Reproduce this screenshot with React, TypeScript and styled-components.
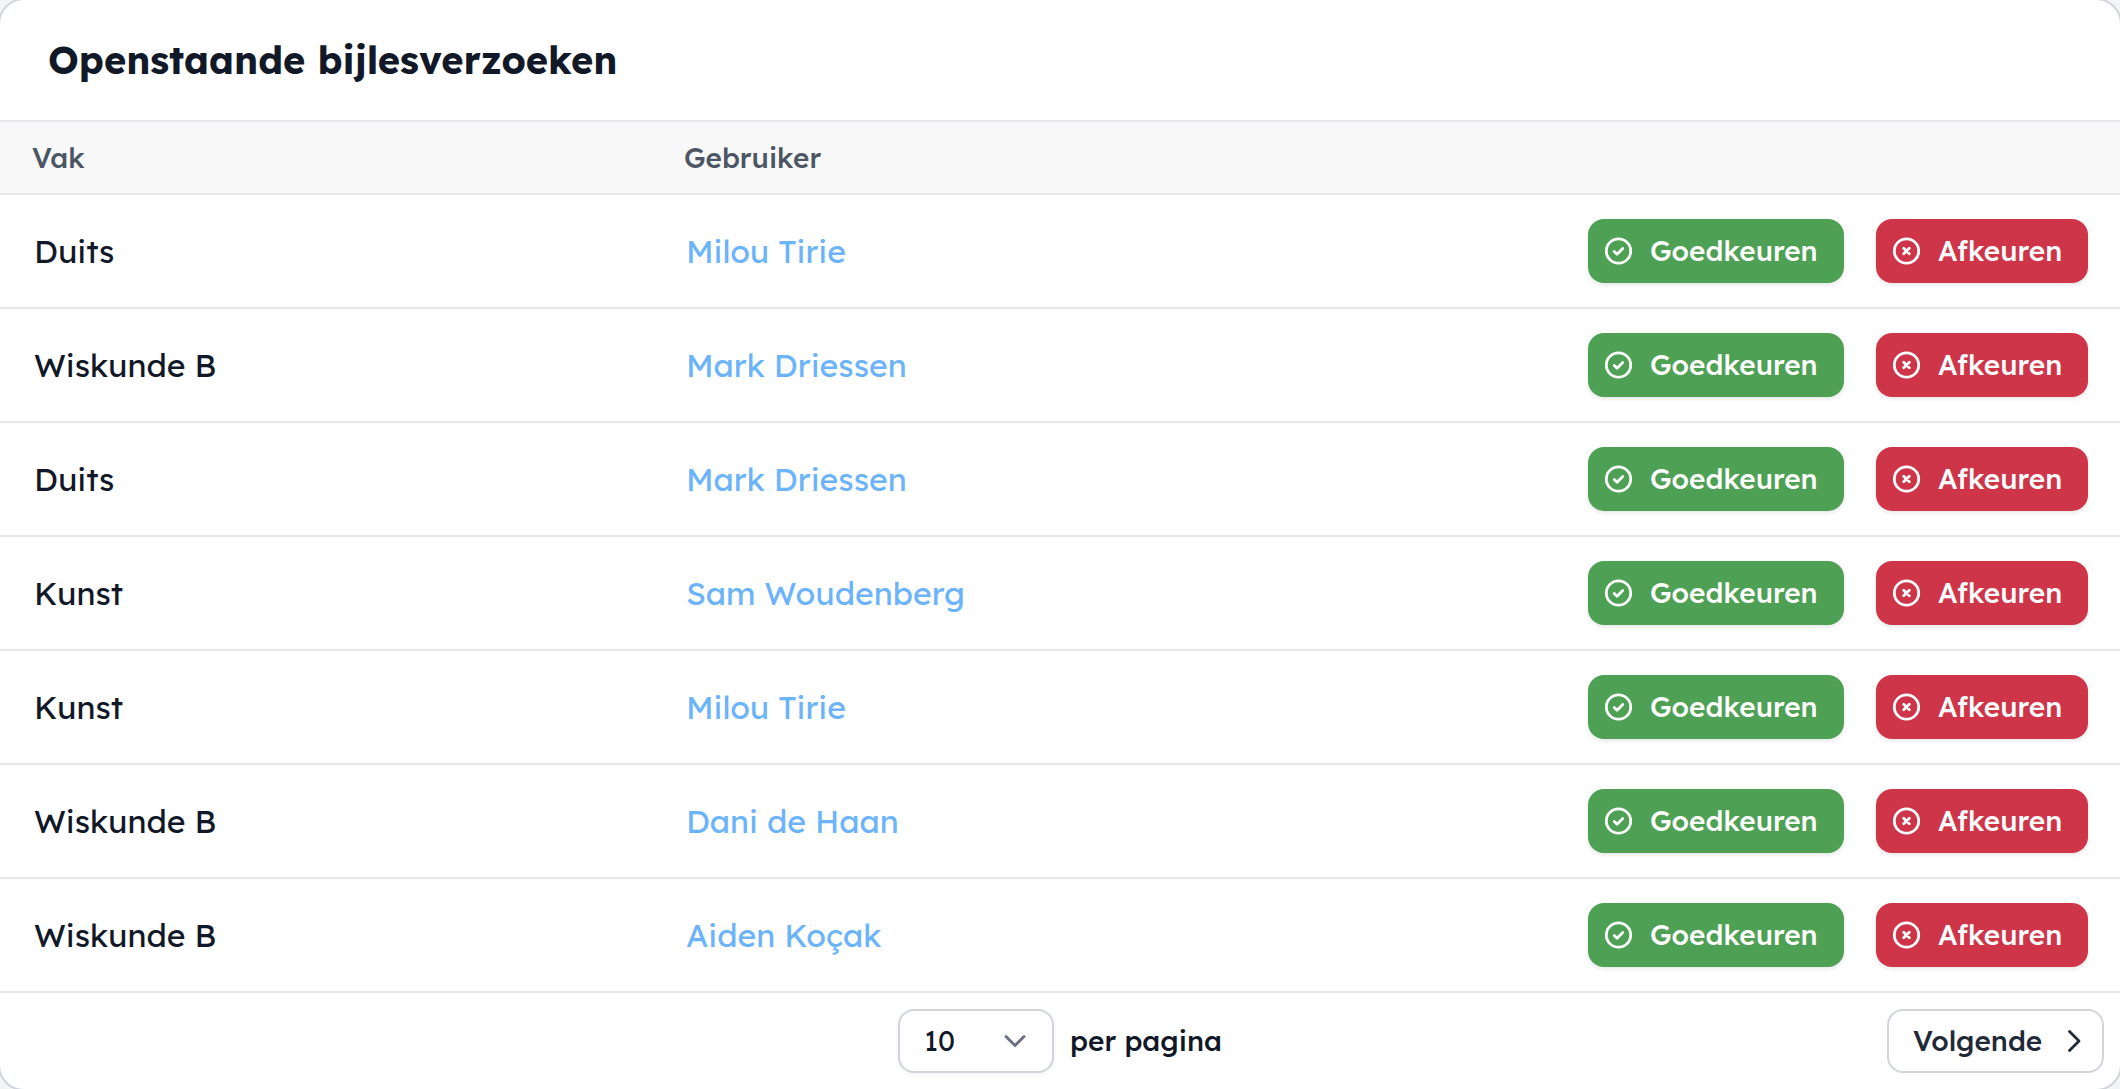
import React, { useState } from "react";
import styled, { createGlobalStyle } from "styled-components";

const GlobalStyle = createGlobalStyle`
  *, *::before, *::after { box-sizing: border-box; }
  body {
    margin: 0;
    background: #f3f4f6;
    color: #111827;
    font-family: Lexend, Inter, "Noto Sans", sans-serif;
    font-size: 28px;
    line-height: 40px;
  }
`;

const Card = styled.main`
  min-height: 100vh;
  display: flex;
  flex-direction: column;
  background: #fff;
  border-radius: 24px;
  box-shadow: 0 0 0 2px #d1d5db;
  overflow: hidden;
`;

const CardHeader = styled.header`
  padding: 36px 48px;
`;

const Title = styled.h1`
  margin: 0;
  font-size: 38px;
  line-height: 48px;
  font-weight: 700;
`;

const Table = styled.table`
  width: 100%;
  table-layout: fixed;
  border-collapse: separate;
  border-spacing: 0;
`;

const HeadCell = styled.th<{ $width?: string }>`
  width: ${(p) => p.$width ?? "auto"};
  height: 75px;
  padding: 0 32px;
  border: solid #e5e7eb;
  border-width: 2px 0;
  background: #f8f8f8;
  color: #4b5563;
  font-weight: 500;
  text-align: left;
`;

const Cell = styled.td`
  height: 114px;
  padding: 0 32px 0 34px;
  border-bottom: 2px solid #e5e7eb;
  font-size: 32px;
`;

const UserLink = styled.a`
  color: #6bb3fb;
  text-decoration: none;
`;

const Actions = styled.div`
  display: flex;
  justify-content: flex-end;
  gap: 32px;
`;

const ActionButton = styled.button<{ $color: string; $width: number }>`
  display: flex;
  align-items: center;
  gap: 16px;
  width: ${(p) => p.$width}px;
  height: 64px;
  padding: 0 0 0 14px;
  border: 0;
  border-radius: 16px;
  background: ${(p) => p.$color};
  box-shadow: 0 2px 4px rgba(0, 0, 0, 0.1);
  color: #fff;
  font: inherit;
  font-size: 28px;
  font-weight: 500;
  cursor: pointer;
`;

const Footer = styled.footer`
  display: grid;
  grid-template-columns: 1fr auto 1fr;
  align-items: center;
  padding: 16px;
`;

const PageSize = styled.div`
  grid-column: 2;
  display: flex;
  align-items: center;
  gap: 16px;
  font-weight: 500;
`;

const SelectBox = styled.div`
  position: relative;
  width: 156px;
`;

const Select = styled.select`
  appearance: none;
  width: 100%;
  height: 64px;
  padding: 0 24px;
  border: 2px solid #d1d5db;
  border-radius: 16px;
  background: #fff;
  box-shadow: 0 2px 4px rgba(0, 0, 0, 0.05);
  color: inherit;
  font: inherit;
  font-weight: 400;
`;

const SelectArrow = styled.svg`
  position: absolute;
  top: 12px;
  right: 20px;
  pointer-events: none;
`;

const NextButton = styled.button`
  justify-self: end;
  display: flex;
  align-items: center;
  justify-content: space-between;
  width: 217px;
  height: 64px;
  padding: 0 14px 0 24px;
  border: 2px solid #d1d5db;
  border-radius: 16px;
  background: #fff;
  color: #1f2937;
  font: inherit;
  font-weight: 500;
  cursor: pointer;
`;

const CheckCircle = () => (
  <svg width="32" height="32" viewBox="0 0 32 32" fill="none" stroke="currentColor" strokeWidth="2.8" strokeLinecap="round" strokeLinejoin="round" aria-hidden="true">
    <circle cx="16.5" cy="16" r="12.2" />
    <path d="M12.2 16.4l2.9 2.8 5.6-5.6" />
  </svg>
);

const CrossCircle = () => (
  <svg width="32" height="32" viewBox="0 0 32 32" fill="none" stroke="currentColor" strokeWidth="2.8" strokeLinecap="round" aria-hidden="true">
    <circle cx="16.5" cy="16" r="12.2" />
    <path d="M13.7 13.2l5.6 5.6M19.3 13.2l-5.6 5.6" />
  </svg>
);

const requests = [
  { subject: "Duits", user: "Milou Tirie" },
  { subject: "Wiskunde B", user: "Mark Driessen" },
  { subject: "Duits", user: "Mark Driessen" },
  { subject: "Kunst", user: "Sam Woudenberg" },
  { subject: "Kunst", user: "Milou Tirie" },
  { subject: "Wiskunde B", user: "Dani de Haan" },
  { subject: "Wiskunde B", user: "Aiden Koçak" },
];

export default function App() {
  const [pageSize, setPageSize] = useState("10");

  return (
    <>
      <GlobalStyle />
      <Card>
        <CardHeader>
          <Title>Openstaande bijlesverzoeken</Title>
        </CardHeader>
        <Table>
          <thead>
            <tr>
              <HeadCell $width="30.75%" scope="col">Vak</HeadCell>
              <HeadCell $width="30.75%" scope="col">Gebruiker</HeadCell>
              <HeadCell as="td" />
            </tr>
          </thead>
          <tbody>
            {requests.map((request, index) => (
              <tr key={index}>
                <Cell>{request.subject}</Cell>
                <Cell>
                  <UserLink href="#">{request.user}</UserLink>
                </Cell>
                <Cell>
                  <Actions>
                    <ActionButton type="button" $color="#4ea154" $width={256}>
                      <CheckCircle />
                      Goedkeuren
                    </ActionButton>
                    <ActionButton type="button" $color="#cf3549" $width={212}>
                      <CrossCircle />
                      Afkeuren
                    </ActionButton>
                  </Actions>
                </Cell>
              </tr>
            ))}
          </tbody>
        </Table>
        <Footer>
          <PageSize>
            <SelectBox>
              <Select id="page-size" value={pageSize} onChange={(e) => setPageSize(e.target.value)}>
                <option>5</option>
                <option>10</option>
                <option>25</option>
                <option>50</option>
              </Select>
              <SelectArrow width="40" height="40" viewBox="0 0 40 40" fill="none" stroke="#6b7280" strokeWidth="3" strokeLinecap="round" strokeLinejoin="round" aria-hidden="true">
                <path d="M12 15.5l9 9 9-9" />
              </SelectArrow>
            </SelectBox>
            <label htmlFor="page-size">per pagina</label>
          </PageSize>
          <NextButton type="button">
            Volgende
            <svg width="28" height="28" viewBox="0 0 28 28" fill="none" stroke="currentColor" strokeWidth="2.8" strokeLinecap="round" strokeLinejoin="round" aria-hidden="true">
              <path d="M9.5 4.5l9.5 9.5-9.5 9.5" />
            </svg>
          </NextButton>
        </Footer>
      </Card>
    </>
  );
}
